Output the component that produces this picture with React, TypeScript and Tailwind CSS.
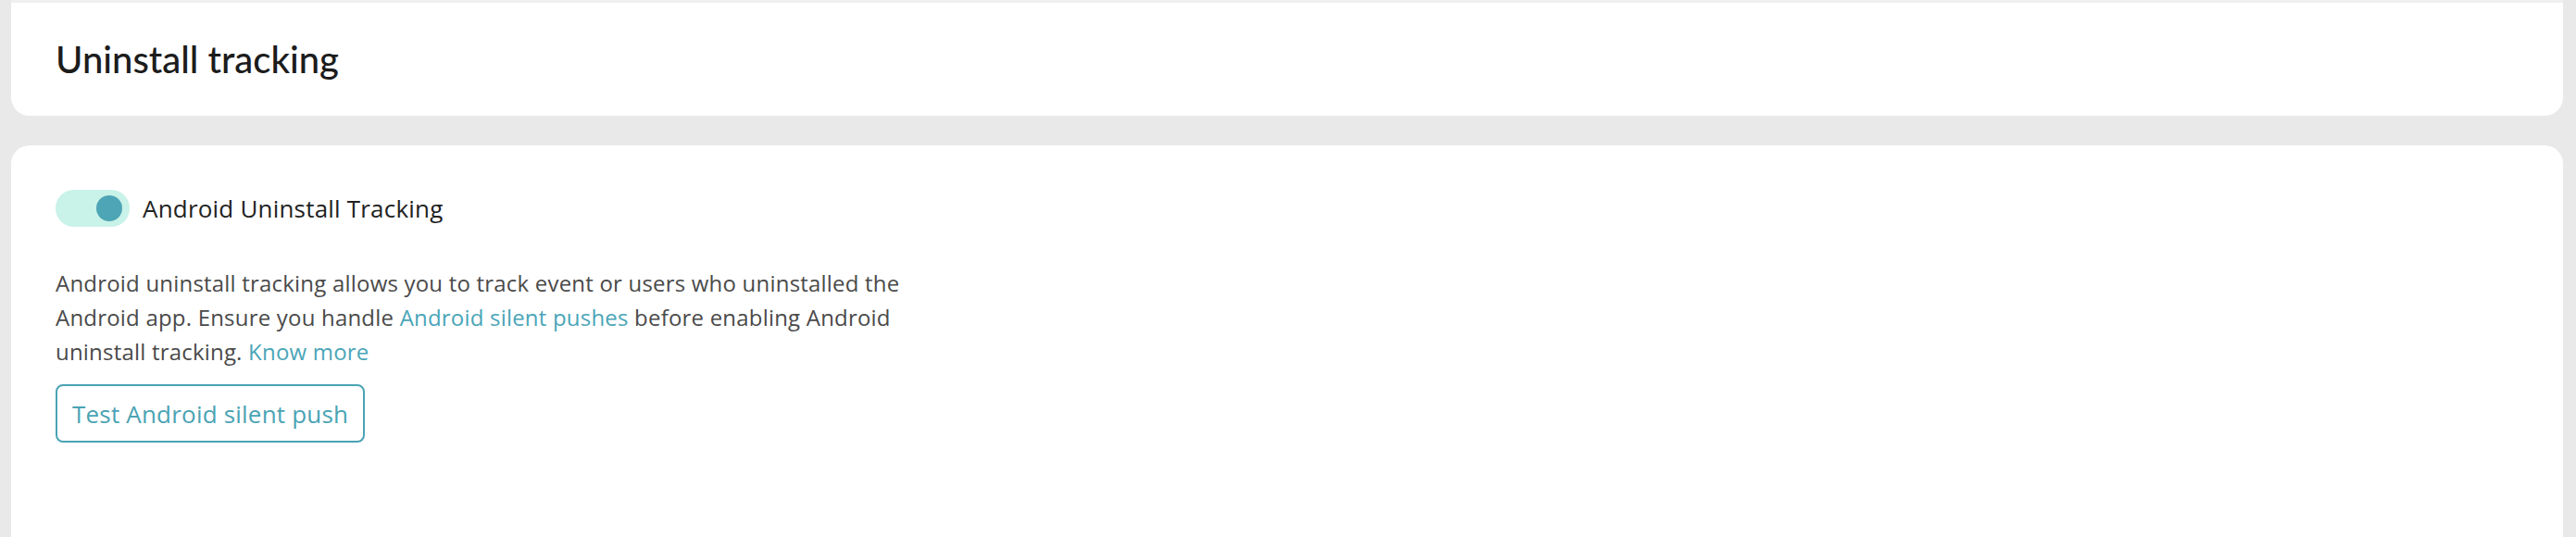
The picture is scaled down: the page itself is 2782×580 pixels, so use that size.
const Toggle = ({ on }: { on: boolean }) => (
  <button
    type="button"
    className={`flex h-[40px] w-[80px] shrink-0 items-center rounded-full px-[8px] ${
      on ? "justify-end bg-[#c9f2e8]" : "justify-start bg-[#e2e2e2]"
    }`}
  >
    <span className="h-[28px] w-[28px] rounded-full bg-[#4ea5b5]" />
  </button>
);

const App = () => {
  return (
    <div
      className="min-h-screen bg-[#e9e9e9] pl-[12px] pr-[14px]"
      style={{ fontFamily: "'Open Sans', 'Noto Sans', sans-serif" }}
    >
      {/* Header */}
      <div className="flex h-[125px] items-center rounded-b-[20px] border-t-[3px] border-t-[#efefef] bg-white px-[48px]">
        <h1
          className="text-[40px] font-medium leading-none text-[#1c1c1c]"
          style={{ fontFamily: "Lato, 'Open Sans', sans-serif" }}
        >
          Uninstall tracking
        </h1>
      </div>

      {/* Settings */}
      <div className="mt-[32px] min-h-[440px] rounded-t-[20px] bg-white px-[48px] pt-[48px]">
        <div className="flex items-center gap-[14px]">
          <Toggle on />
          <span className="text-[26px] leading-none tracking-[0.2px] text-[#222222]">
            Android Uninstall Tracking
          </span>
        </div>

        <p className="mt-[42px] max-w-[950px] text-[24px] leading-[37px] tracking-[0.2px] text-[#4a4a4a]">
          Android uninstall tracking allows you to track event or users who
          uninstalled the Android app. Ensure you handle{" "}
          <a href="#" className="text-[#4aa5b8]">
            Android silent pushes
          </a>{" "}
          before enabling Android uninstall tracking.{" "}
          <a href="#" className="text-[#4aa5b8]">
            Know more
          </a>
        </p>

        <button
          type="button"
          className="mt-[17px] flex h-[63px] items-center rounded-[8px] border-2 border-[#4aa3b4] px-[16px] text-[26px] leading-none tracking-[0.2px] text-[#4aa3b4]"
        >
          Test Android silent push
        </button>
      </div>
    </div>
  );
};

export default App;
